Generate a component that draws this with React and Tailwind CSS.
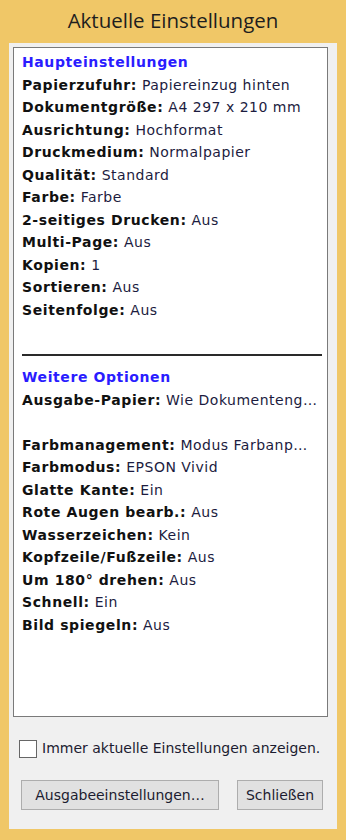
import React from 'react';

const main = [
  ['Papierzufuhr:', 'Papiereinzug hinten'],
  ['Dokumentgröße:', 'A4 297 x 210 mm'],
  ['Ausrichtung:', 'Hochformat'],
  ['Druckmedium:', 'Normalpapier'],
  ['Qualität:', 'Standard'],
  ['Farbe:', 'Farbe'],
  ['2-seitiges Drucken:', 'Aus'],
  ['Multi-Page:', 'Aus'],
  ['Kopien:', '1'],
  ['Sortieren:', 'Aus'],
  ['Seitenfolge:', 'Aus'],
];

const more = [
  ['Farbmanagement:', 'Modus Farbanp…'],
  ['Farbmodus:', 'EPSON Vivid'],
  ['Glatte Kante:', 'Ein'],
  ['Rote Augen bearb.:', 'Aus'],
  ['Wasserzeichen:', 'Kein'],
  ['Kopfzeile/Fußzeile:', 'Aus'],
  ['Um 180° drehen:', 'Aus'],
  ['Schnell:', 'Ein'],
  ['Bild spiegeln:', 'Aus'],
];

function Row({ label, value }) {
  return (
    <div className="h-[22.5px] leading-[22.5px] whitespace-nowrap">
      <span className="font-bold text-[#111] tracking-[0.6px]">{label}</span>
      <span className="text-[#1c1c40] tracking-[0.5px]"> {value}</span>
    </div>
  );
}

export default function App() {
  return (
    <div className="w-[346px] h-[840px] bg-[#f0c767] flex flex-col font-['DejaVu_Sans',sans-serif]">
      {/* Title bar */}
      <div className="h-[43px] flex items-center justify-center pb-[2px] text-[20.5px] text-[#1e1e1e] font-['Open_Sans',sans-serif]">
        Aktuelle Einstellungen
      </div>

      {/* Client area */}
      <div className="mx-[9px] mb-[11px] flex-1 bg-[#f0f0f0] flex flex-col">
        <div className="ml-[4px] mr-[9px] mt-[4px] h-[670px] border border-[#7a7a7a] bg-white pl-[8px] pr-[5px] pt-[3px] text-[14px]">
          <div className="h-[22.5px] leading-[22.5px] font-bold text-[#2a1cff] tracking-[0.6px]">Haupteinstellungen</div>
          {main.map(([l, v]) => <Row key={l} label={l} value={v} />)}
          <div className="h-[22.5px]" />
          <div className="h-[22.5px] flex items-center">
            <div className="w-[300px] h-[2px] bg-[#2a2a2a]" />
          </div>
          <div className="h-[22.5px] leading-[22.5px] font-bold text-[#2a1cff] tracking-[0.6px]">Weitere Optionen</div>
          <Row label="Ausgabe-Papier:" value="Wie Dokumenteng…" />
          <div className="h-[22.5px]" />
          {more.map(([l, v]) => <Row key={l} label={l} value={v} />)}
        </div>

        <div className="mt-[21px] ml-[10px] flex items-center gap-[5px] text-[14px] text-[#1c1c30]">
          <div className="w-[18px] h-[18px] border border-[#666] bg-white" />
          <span>Immer aktuelle Einstellungen anzeigen.</span>
        </div>

        <div className="mt-[21px] ml-[12px] flex gap-[18px] text-[14px] text-[#1c1c30]">
          <button className="w-[198px] h-[30px] bg-[#e1e1e1] border border-[#adadad]">Ausgabeeinstellungen…</button>
          <button className="w-[86px] h-[30px] bg-[#e1e1e1] border border-[#adadad]">Schließen</button>
        </div>
      </div>
    </div>
  );
}
